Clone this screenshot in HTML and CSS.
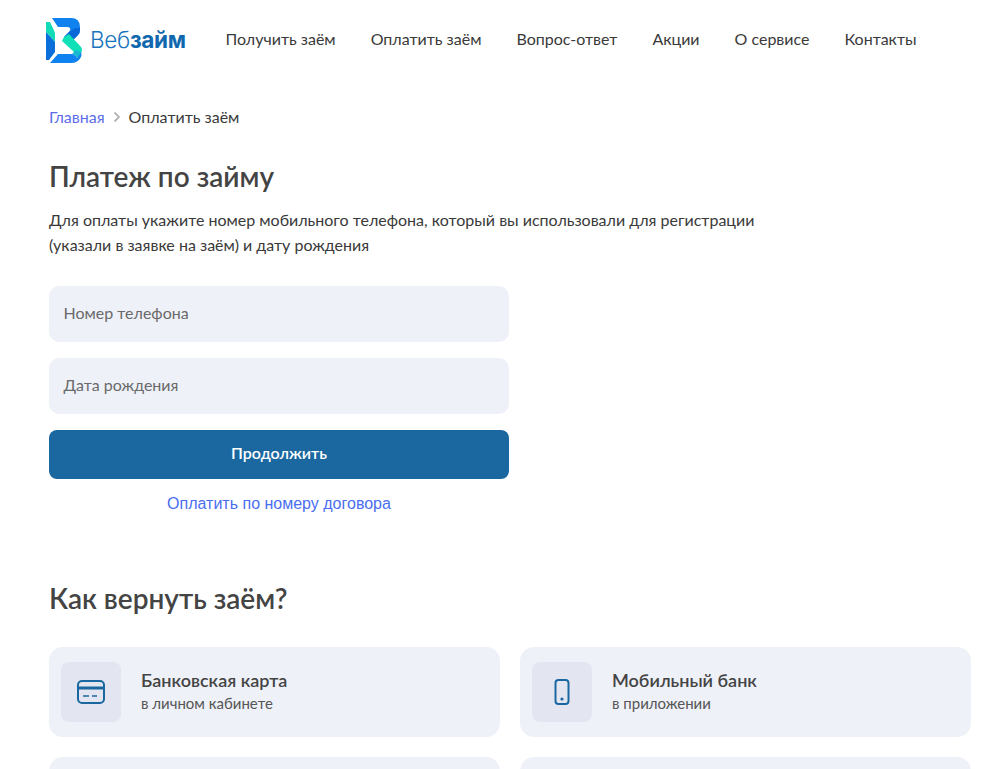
FILE: index.html
```html
<!DOCTYPE html>
<html lang="ru">
<head>
<meta charset="utf-8">
<title>Платеж по займу</title>
<link rel="stylesheet" href="styles.css">
</head>
<body>
<header class="header">
  <a class="logo" href="#">
    <svg class="logo-mark" width="36" height="46" viewBox="46 17 36 46">
      <path d="M52 18H71Q80 18 80 27V30Q80 33 78 35L70 43L64 37L69 32Q71 30 70 28Q69 27 67 27H58Z" fill="#0f82f0"/>
      <path d="M69 32L75 28H80V30Q80 33 78 35L70 43L64 37Z" fill="#0868d8"/>
      <path d="M46 22H50Q53 28 55 33V42L46 32Z" fill="#12dcb8"/>
      <path d="M46 32L55 42V52L49 60H46Z" fill="#0a6fd8"/>
      <path d="M64 37L69 34L81 47Q83 50 81 53L77 58Q76 54 73 51L62 41Z" fill="#0fe0b8"/>
      <path d="M50 63L58 54H72Q75 54 77 58L81 52Q82 55 81 57Q78 63 71 63Z" fill="#0f82f0"/>
      <path d="M72 54Q75 54 77 58L81 52L76 50Z" fill="#18b8d0"/>
    </svg>
    <span class="logo-text">Веб<b>займ</b></span>
  </a>
  <nav class="nav">
    <a href="#">Получить заём</a>
    <a href="#">Оплатить заём</a>
    <a href="#">Вопрос-ответ</a>
    <a href="#">Акции</a>
    <a href="#">О сервисе</a>
    <a href="#">Контакты</a>
  </nav>
</header>
<main class="main">
  <div class="crumbs">
    <a href="#">Главная</a>
    <svg width="8" height="12" viewBox="0 0 8 12"><path d="M1.500 1.500L6 6L1.500 10.500" fill="none" stroke="#b5b5b5" stroke-width="1.800"/></svg>
    <span>Оплатить заём</span>
  </div>
  <h1 class="title">Платеж по займу</h1>
  <p class="lead">Для оплаты укажите номер мобильного телефона, который вы использовали для регистрации<br>(указали в заявке на заём) и дату рождения</p>
  <form class="form">
    <div class="field">Номер телефона</div>
    <div class="field">Дата рождения</div>
    <button class="btn" type="button">Продолжить</button>
    <a class="alt" href="#">Оплатить по номеру договора</a>
  </form>
  <h2 class="subtitle">Как вернуть заём?</h2>
  <div class="grid">
    <div class="card">
      <div class="icon"><svg width="28" height="24" viewBox="0 0 28 24" fill="none" stroke="#1a689f" stroke-width="2"><rect x="1" y="1" width="26" height="22" rx="4"/><path d="M1 8H27" stroke-width="3"/><path d="M6 16H12M15 16H20" stroke-width="1.600"/></svg></div>
      <div><div class="card-title">Банковская карта</div><div class="card-sub">в личном кабинете</div></div>
    </div>
    <div class="card">
      <div class="icon"><svg width="16" height="26" viewBox="0 0 16 26" fill="none" stroke="#1a689f" stroke-width="2"><rect x="1.500" y="1" width="13" height="24" rx="3"/><circle cx="8" cy="20" r="1.600" fill="#1a689f" stroke="none"/></svg></div>
      <div><div class="card-title">Мобильный банк</div><div class="card-sub">в приложении</div></div>
    </div>
    <div class="card"></div>
    <div class="card"></div>
  </div>
</main>
</body>
</html>
```
FILE: styles.css
```css
* { box-sizing: border-box; }
html, body { margin: 0; overflow: hidden; height: 769px; background: #fff; }
body { font-family: Lato, "Open Sans", sans-serif; color: #3a3a3a; }
a { text-decoration: none; color: inherit; }
.header { display: flex; align-items: center; height: 79px; padding-left: 46px; }
.logo { display: flex; align-items: center; width: 179.500px; }
.logo-mark { display: block; margin-right: 8px; }
.logo-text { font-size: 22.500px; color: #1a74bd; font-family: Inter, sans-serif; font-weight: 300; letter-spacing: -0.3px; }
.logo-text b { font-weight: 700; color: #0f67ad; }
.nav { display: flex; gap: 35px; font-size: 16px; line-height: 22px; color: #3a3a3a; padding-bottom: 2px; }
.main { padding: 0 24px 0 49px; }
.crumbs { display: flex; align-items: center; gap: 8px; margin-top: 27px; font-size: 16px; line-height: 22px; color: #3a3a3a; }
.crumbs a { color: #5b6ee8; }
.title { margin: 30px 0 0; font-size: 28px; line-height: 36px; font-weight: 600; color: #444; }
.lead { margin: 13px 0 0; font-size: 16px; line-height: 25px; color: #3a3a3a; }
.form { width: 460px; margin-top: 29px; display: flex; flex-direction: column; }
.field { height: 56px; margin-bottom: 16px; padding: 0 14.500px 4px; display: flex; align-items: center; background: #eef1f8; border-radius: 10px; font-size: 16px; color: #6a6a6a; }
.btn { height: 49px; padding: 0 0 5px; border: 0; border-radius: 8px; background: #1a689f; color: #fff; font: 600 16px Lato, sans-serif; }
.alt { margin-top: 15px; text-align: center; font: 16px/20px "Liberation Sans", sans-serif; color: #4a6ef0; }
.subtitle { margin: 66px 0 0; font-size: 28px; line-height: 36px; font-weight: 600; color: #444; }
.grid { display: grid; grid-template-columns: 451px 451px; gap: 20px; margin-top: 31px; }
.card { height: 90px; padding: 15px 12px; display: flex; align-items: center; gap: 20px; background: #eef1f8; border-radius: 14px; }
.icon { width: 60px; height: 60px; display: flex; align-items: center; justify-content: center; background: #e3e6f1; border-radius: 8px; }
.card-title { font-size: 18px; line-height: 24px; font-weight: 600; color: #444; margin-top: -4px; }
.card-sub { font-size: 15px; line-height: 20px; color: #555; margin-top: 1px; }
```
